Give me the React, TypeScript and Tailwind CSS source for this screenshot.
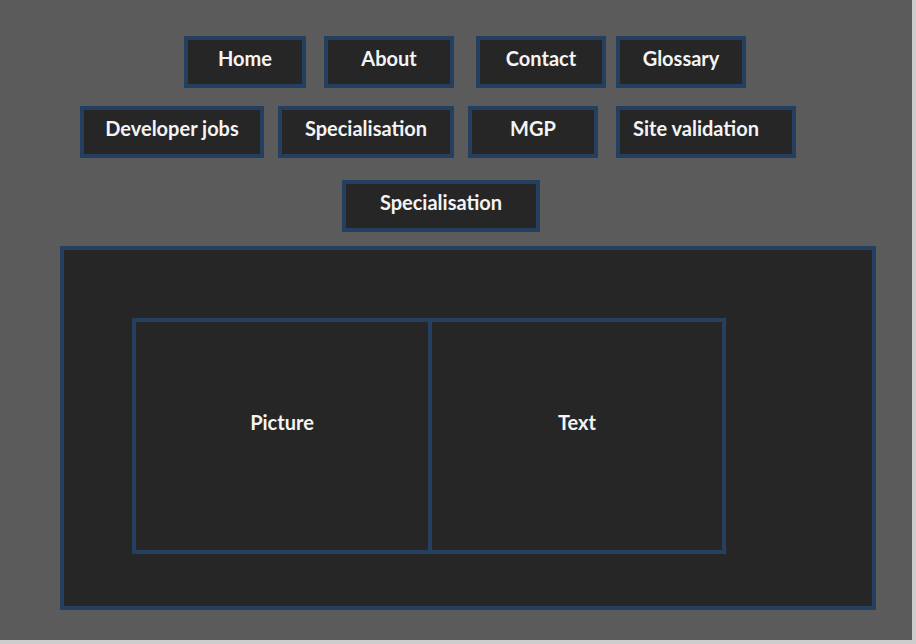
const font = { fontFamily: "Lato, 'Noto Sans', sans-serif" };

const navButton =
  "flex h-[52px] items-center justify-center border-4 border-[#243f60] bg-[#262626] pb-[8px] text-[20px] font-bold text-[#f4f4f4]";

function NavButton({ label, className }: { label: string; className: string }) {
  return <div className={`${navButton} ${className}`}>{label}</div>;
}

export default function App() {
  return (
    <div className="h-[644px] w-[916px] bg-[#cccccc]" style={font}>
      <div className="h-[640px] w-[912px] bg-[#5b5b5b] pt-[36px]">
        <div className="flex pl-[184px]">
          <NavButton label="Home" className="w-[122px]" />
          <NavButton label="About" className="ml-[18px] w-[130px]" />
          <NavButton label="Contact" className="ml-[22px] w-[130px]" />
          <NavButton label="Glossary" className="ml-[10px] w-[130px]" />
        </div>
        <div className="mt-[18px] flex pl-[80px]">
          <NavButton label="Developer jobs" className="w-[184px]" />
          <NavButton label="Specialisation" className="ml-[14px] w-[176px]" />
          <NavButton label="MGP" className="ml-[14px] w-[130px]" />
          <NavButton label="Site validation" className="ml-[18px] w-[180px] pr-[20px]" />
        </div>
        <div className="mt-[22px] flex pl-[342px]">
          <NavButton label="Specialisation" className="w-[198px]" />
        </div>
        <div className="ml-[60px] mt-[14px] h-[364px] w-[816px] border-4 border-[#243f60] bg-[#262626] pl-[68px] pt-[68px]">
          <div className="flex h-[236px] w-[594px] border-4 border-[#243f60] text-[20px] font-bold text-[#f4f4f4]">
            <div className="flex w-[292px] items-center justify-center pb-[28px]">Picture</div>
            <div className="flex flex-1 items-center justify-center border-l-4 border-[#243f60] pb-[28px]">Text</div>
          </div>
        </div>
      </div>
    </div>
  );
}
